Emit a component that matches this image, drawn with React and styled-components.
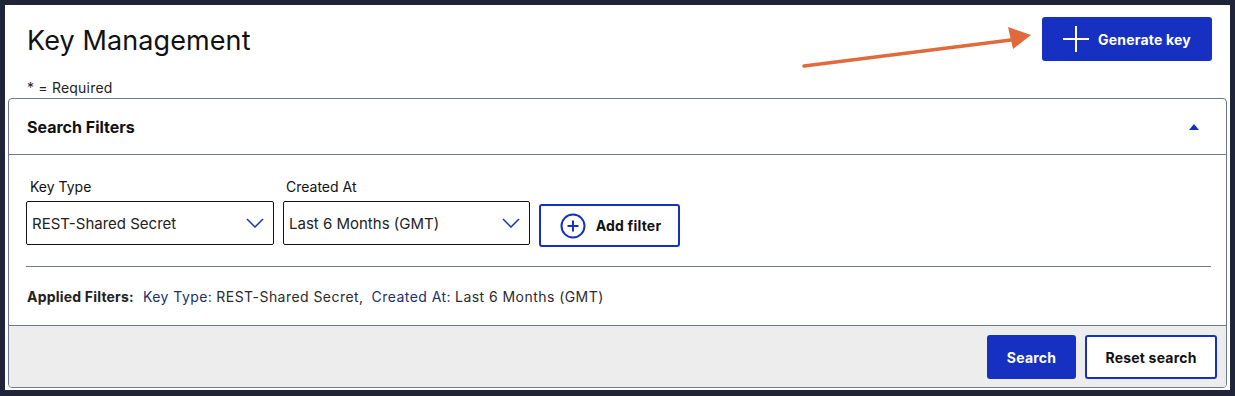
import React from "react";
import styled, { createGlobalStyle } from "styled-components";

const GlobalStyle = createGlobalStyle`
  body {
    margin: 0;
    background: #1f2439;
    font-family: Inter, "Open Sans", Arial, sans-serif;
    color: #111;
  }
`;

const Frame = styled.div`
  position: relative;
  margin: 5px 5px 6px 5px;
  height: 385px;
  background: #fff;
  display: flex;
  flex-direction: column;
  box-sizing: border-box;
`;

const TopBar = styled.div`
  display: flex;
  align-items: center;
  justify-content: space-between;
  padding: 12px 18px 0 22px;
`;

const Title = styled.h1`
  margin: 3px 0 0 0;
  font-size: 27px;
  font-weight: 400;
  letter-spacing: 0.1px;
  color: #111;
`;

const Button = styled.button`
  display: flex;
  align-items: center;
  justify-content: center;
  gap: 9px;
  height: ${(p) => p.h || 44}px;
  width: ${(p) => p.w}px;
  box-sizing: border-box;
  border-radius: 3px;
  font-family: inherit;
  font-size: 14px;
  font-weight: 700;
  letter-spacing: 0.2px;
  cursor: pointer;
  background: ${(p) => (p.primary ? "#1631c2" : "#fff")};
  color: ${(p) => (p.primary ? "#fff" : "#111")};
  border: ${(p) => (p.primary ? "none" : "2px solid #1631c2")};
`;

const Required = styled.div`
  margin: 18px 0 0 22px;
  font-size: 14px;
  line-height: 18px;
  letter-spacing: 0.2px;
  color: #222;
`;

const Panel = styled.section`
  flex: 1;
  margin: 1px 3px 2px 3px;
  border: 1px solid #6c7890;
  border-radius: 4px;
  display: flex;
  flex-direction: column;
  overflow: hidden;
`;

const PanelHeader = styled.div`
  height: 55px;
  display: flex;
  align-items: center;
  justify-content: space-between;
  padding: 0 27px 0 18px;
  border-bottom: 1px solid #6c7890;
  font-size: 16px;
  font-weight: 700;
`;

const PanelBody = styled.div`
  flex: 1;
  padding: 22px 15px 0 17px;
`;

const FilterRow = styled.div`
  display: flex;
  align-items: flex-end;
  gap: 9px;
`;

const Field = styled.div`
  display: flex;
  flex-direction: column;
  gap: 4px;
`;

const Label = styled.label`
  font-size: 14px;
  line-height: 20px;
  padding-left: ${(p) => p.indent || 4}px;
  color: #111;
`;

const Select = styled.div`
  width: ${(p) => p.w}px;
  height: 44px;
  box-sizing: border-box;
  border: 1px solid #111;
  border-radius: 2px;
  display: flex;
  align-items: center;
  justify-content: space-between;
  padding: 0 9px 0 5px;
  font-size: 15px;
  color: #222;
`;

const AddButton = styled(Button)`
  margin-bottom: -2px;
  gap: 10px;
  padding-right: 4px;
`;

const Divider = styled.hr`
  margin: 21px 0 0 0;
  border: none;
  border-top: 1px solid #6c7890;
`;

const Applied = styled.div`
  display: flex;
  align-items: center;
  height: 58px;
  padding-top: 1px;
  box-sizing: border-box;
  font-size: 14px;
  letter-spacing: 0.45px;
  color: #2b2b2b;
  margin-left: 1px;
`;

const AppliedTitle = styled.span`
  font-weight: 700;
  letter-spacing: 0.2px;
  color: #222;
  margin-right: 9px;
`;

const Key = styled.span`
  color: #1c2f66;
  margin-right: 4px;
`;

const Value = styled.span`
  margin-right: 8px;
`;

const Footer = styled.div`
  height: 62px;
  box-sizing: border-box;
  background: #ededed;
  border-top: 1px solid #6c7890;
  display: flex;
  justify-content: flex-end;
  align-items: flex-start;
  gap: 9px;
  padding: 9px 9px 0 0;
`;

const Annotation = styled.svg`
  position: absolute;
  left: 0;
  top: 0;
  pointer-events: none;
`;

const Chevron = () => (
  <svg width="18" height="10" viewBox="0 0 18 10">
    <polyline points="1,1 9,9 17,1" fill="none" stroke="#1631c2" strokeWidth="1.5" />
  </svg>
);

const App = () => (
  <>
    <GlobalStyle />
    <Frame>
      <TopBar>
        <Title>Key Management</Title>
        <Button primary w={170}>
          <svg width="26" height="26" viewBox="0 0 26 26">
            <path d="M13 0v26M0 13h26" stroke="#fff" strokeWidth="2" />
          </svg>
          Generate key
        </Button>
      </TopBar>
      <Required>* = Required</Required>
      <Panel>
        <PanelHeader>
          Search Filters
          <svg width="10" height="6" viewBox="0 0 10 6">
            <polygon points="0,6 5,0 10,6" fill="#1631c2" />
          </svg>
        </PanelHeader>
        <PanelBody>
          <FilterRow>
            <Field>
              <Label>Key Type</Label>
              <Select w={248}>
                REST-Shared Secret
                <Chevron />
              </Select>
            </Field>
            <Field>
              <Label indent={3}>Created At</Label>
              <Select w={247}>
                Last 6 Months (GMT)
                <Chevron />
              </Select>
            </Field>
            <AddButton w={141} h={43}>
              <svg width="26" height="26" viewBox="0 0 26 26">
                <circle cx="13" cy="13" r="11.5" fill="none" stroke="#1631c2" strokeWidth="2" />
                <path d="M13 7.5v11M7.5 13h11" stroke="#1631c2" strokeWidth="2" />
              </svg>
              Add filter
            </AddButton>
          </FilterRow>
          <Divider />
          <Applied>
            <AppliedTitle>Applied Filters:</AppliedTitle>
            <Key>Key Type:</Key>
            <Value>REST-Shared Secret,</Value>
            <Key>Created At:</Key>
            <Value>Last 6 Months (GMT)</Value>
          </Applied>
        </PanelBody>
        <Footer>
          <Button primary w={89}>Search</Button>
          <Button w={132}>Reset search</Button>
        </Footer>
      </Panel>
      <Annotation width="1225" height="100">
        <line x1="799" y1="61" x2="1006" y2="35" stroke="#e06a3c" strokeWidth="3.5" strokeLinecap="round" />
        <polygon points="1026,30 1003,22 1008,44" fill="#e06a3c" />
      </Annotation>
    </Frame>
  </>
);

export default App;
